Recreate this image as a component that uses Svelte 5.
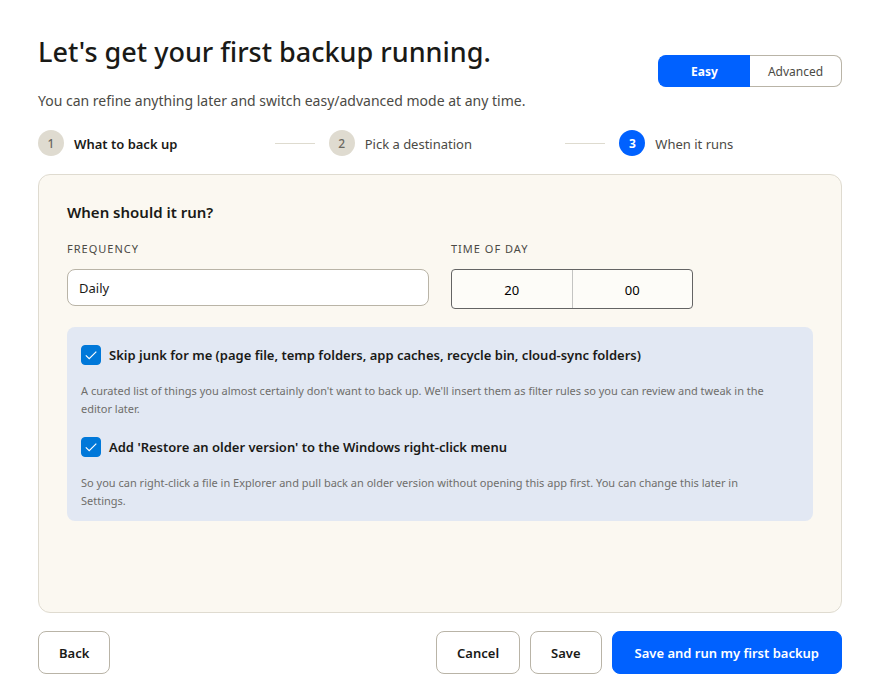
<script>
  let mode = $state('easy');
  let frequency = $state('Daily');
  let hour = $state('20');
  let minute = $state('00');
  let skipJunk = $state(true);
  let contextMenu = $state(true);
</script>

<main>
  <header>
    <div class="intro">
      <h1>Let's get your first backup running.</h1>
      <p>You can refine anything later and switch easy/advanced mode at any time.</p>
    </div>
    <div class="mode" role="group" aria-label="Mode">
      <button type="button" class:on={mode === 'easy'} aria-pressed={mode === 'easy'} onclick={() => (mode = 'easy')}>Easy</button>
      <button type="button" class:on={mode === 'advanced'} aria-pressed={mode === 'advanced'} onclick={() => (mode = 'advanced')}>Advanced</button>
    </div>
  </header>

  <ol class="steps">
    <li class="step strong"><span class="dot">1</span><span class="name">What to back up</span></li>
    <li class="line" aria-hidden="true"></li>
    <li class="step"><span class="dot">2</span><span class="name">Pick a destination</span></li>
    <li class="line" aria-hidden="true"></li>
    <li class="step current" aria-current="step"><span class="dot">3</span><span class="name">When it runs</span></li>
  </ol>

  <section class="card">
    <h2>When should it run?</h2>
    <div class="fields">
      <div class="field">
        <label for="frequency">FREQUENCY</label>
        <select id="frequency" bind:value={frequency}>
          <option>Daily</option>
          <option>Weekly</option>
          <option>Monthly</option>
        </select>
      </div>
      <div class="field">
        <label for="hour">TIME OF DAY</label>
        <div class="time">
          <input id="hour" type="text" inputmode="numeric" bind:value={hour} />
          <input type="text" inputmode="numeric" aria-label="Minute" bind:value={minute} />
        </div>
      </div>
    </div>

    <div class="options">
      <div class="option">
        <label>
          <span class="check">
            <input type="checkbox" bind:checked={skipJunk} />
            <svg viewBox="0 0 20 20" aria-hidden="true"><path d="M4.8 10.4 8.2 13.7 15.3 6.6" /></svg>
          </span>
          <span>Skip junk for me (page file, temp folders, app caches, recycle bin, cloud-sync folders)</span>
        </label>
        <p>A curated list of things you almost certainly don't want to back up. We'll insert them as filter rules so you can review and tweak in the editor later.</p>
      </div>
      <div class="option">
        <label>
          <span class="check">
            <input type="checkbox" bind:checked={contextMenu} />
            <svg viewBox="0 0 20 20" aria-hidden="true"><path d="M4.8 10.4 8.2 13.7 15.3 6.6" /></svg>
          </span>
          <span>Add 'Restore an older version' to the Windows right-click menu</span>
        </label>
        <p>So you can right-click a file in Explorer and pull back an older version without opening this app first. You can change this later in Settings.</p>
      </div>
    </div>
  </section>

  <footer>
    <button type="button" class="back">Back</button>
    <button type="button">Cancel</button>
    <button type="button">Save</button>
    <button type="button" class="primary">Save and run my first backup</button>
  </footer>
</main>

<style>
  :global(body) {
    margin: 0;
    background: #fff;
  }

  main {
    box-sizing: border-box;
    min-height: 100vh;
    padding: 31px 38px 26px;
    display: flex;
    flex-direction: column;
    font-family: 'Segoe UI', 'Noto Sans', 'Open Sans', sans-serif;
    font-size: 14px;
    line-height: 20px;
    color: #1a1a17;
  }

  h1, h2, p, ol {
    margin: 0;
    padding: 0;
  }

  button, input, select {
    box-sizing: border-box;
    font: inherit;
    color: inherit;
  }

  header {
    display: flex;
    align-items: center;
    justify-content: space-between;
  }

  h1 {
    font-size: 27px;
    line-height: 42px;
    font-weight: 500;
  }

  .intro p {
    margin-top: 17px;
    line-height: 21px;
    color: #4b4a45;
  }

  .mode {
    display: flex;
  }

  .mode button {
    width: 92px;
    height: 32px;
    padding: 1px 0 0;
    border: 1px solid #b9b4a7;
    background: #fff;
    font-size: 12px;
    color: #4b4a45;
  }

  .mode button:first-child {
    border-radius: 8px 0 0 8px;
    border-right: 0;
  }

  .mode button:last-child {
    border-radius: 0 8px 8px 0;
    border-left: 0;
  }

  .mode button.on {
    background: #0061ff;
    border-color: #0061ff;
    color: #fff;
    font-weight: 700;
  }

  .steps {
    display: flex;
    align-items: center;
    gap: 14px;
    margin-top: 19px;
    list-style: none;
    font-size: 13px;
  }

  .step {
    flex: 1 1 0;
    display: flex;
    align-items: center;
    gap: 10px;
    color: #4b4a45;
  }

  .name {
    padding-top: 2px;
  }

  .strong {
    color: #1a1a17;
    font-weight: 600;
  }

  .line {
    flex: 0 0 40px;
    height: 1px;
    background: #dedbcf;
  }

  .dot {
    width: 26px;
    height: 26px;
    border-radius: 50%;
    background: #dfdbd0;
    color: #6b6860;
    font-size: 12px;
    line-height: 27px;
    font-weight: 500;
    text-align: center;
  }

  .current .dot {
    background: #0061ff;
    color: #fff;
    font-weight: 700;
  }

  .card {
    flex: 1;
    margin-top: 18px;
    padding: 27px 28px;
    border: 1px solid #dfdbd0;
    border-radius: 12px;
    background: #fbf8f1;
  }

  h2 {
    font-size: 15px;
    line-height: 20px;
    font-weight: 600;
  }

  .fields {
    display: grid;
    grid-template-columns: 1fr 1fr;
    gap: 22px;
    margin-top: 19px;
  }

  .field > label {
    display: block;
    margin-bottom: 12px;
    font-size: 11px;
    line-height: 16px;
    letter-spacing: 1px;
    color: #4b4a45;
  }

  select {
    appearance: none;
    display: block;
    width: 100%;
    height: 37px;
    padding: 0 11px;
    border: 1px solid #b9b4a7;
    border-radius: 8px;
    background: #fff;
    font-size: 13px;
  }

  .time {
    display: flex;
    max-width: 242px;
    height: 40px;
    box-sizing: border-box;
    border: 1px solid #646464;
    border-radius: 4px;
    background: #fdfcf8;
    overflow: hidden;
  }

  .time input {
    flex: 1 1 0;
    min-width: 0;
    padding: 2px 0 0;
    border: 0;
    background: none;
    text-align: center;
    font-size: 13px;
    color: #000;
  }

  .time input + input {
    border-left: 1px solid #c4c4c2;
  }

  .options {
    display: flex;
    flex-direction: column;
    gap: 19px;
    margin-top: 18px;
    padding: 18px 14px 11px;
    border-radius: 8px;
    background: #e2e8f3;
  }

  .option label {
    display: flex;
    align-items: center;
    gap: 8px;
    font-size: 13px;
    font-weight: 600;
  }

  .option p {
    margin-top: 17px;
    padding-right: 24px;
    font-size: 11px;
    line-height: 18px;
    color: #6f6e6b;
  }

  .check {
    position: relative;
    width: 20px;
    height: 20px;
  }

  .check input {
    appearance: none;
    display: block;
    width: 20px;
    height: 20px;
    margin: 0;
    border: 1px solid #646464;
    border-radius: 4px;
    background: #fff;
  }

  .check input:checked {
    border-color: #0078d9;
    background: #0078d9;
  }

  .check svg {
    position: absolute;
    inset: 0;
    fill: none;
    stroke: #fff;
    stroke-width: 1.2;
    pointer-events: none;
  }

  footer {
    display: flex;
    gap: 10px;
    margin-top: 18px;
  }

  footer button {
    height: 43px;
    padding: 0 20px;
    border: 1px solid #b9b4a7;
    border-radius: 8px;
    background: #fff;
    font-size: 13px;
    font-weight: 600;
  }

  .back {
    margin-right: auto;
  }

  footer .primary {
    padding: 0 22px;
    border-color: #0061ff;
    background: #0061ff;
    color: #fff;
  }
</style>
